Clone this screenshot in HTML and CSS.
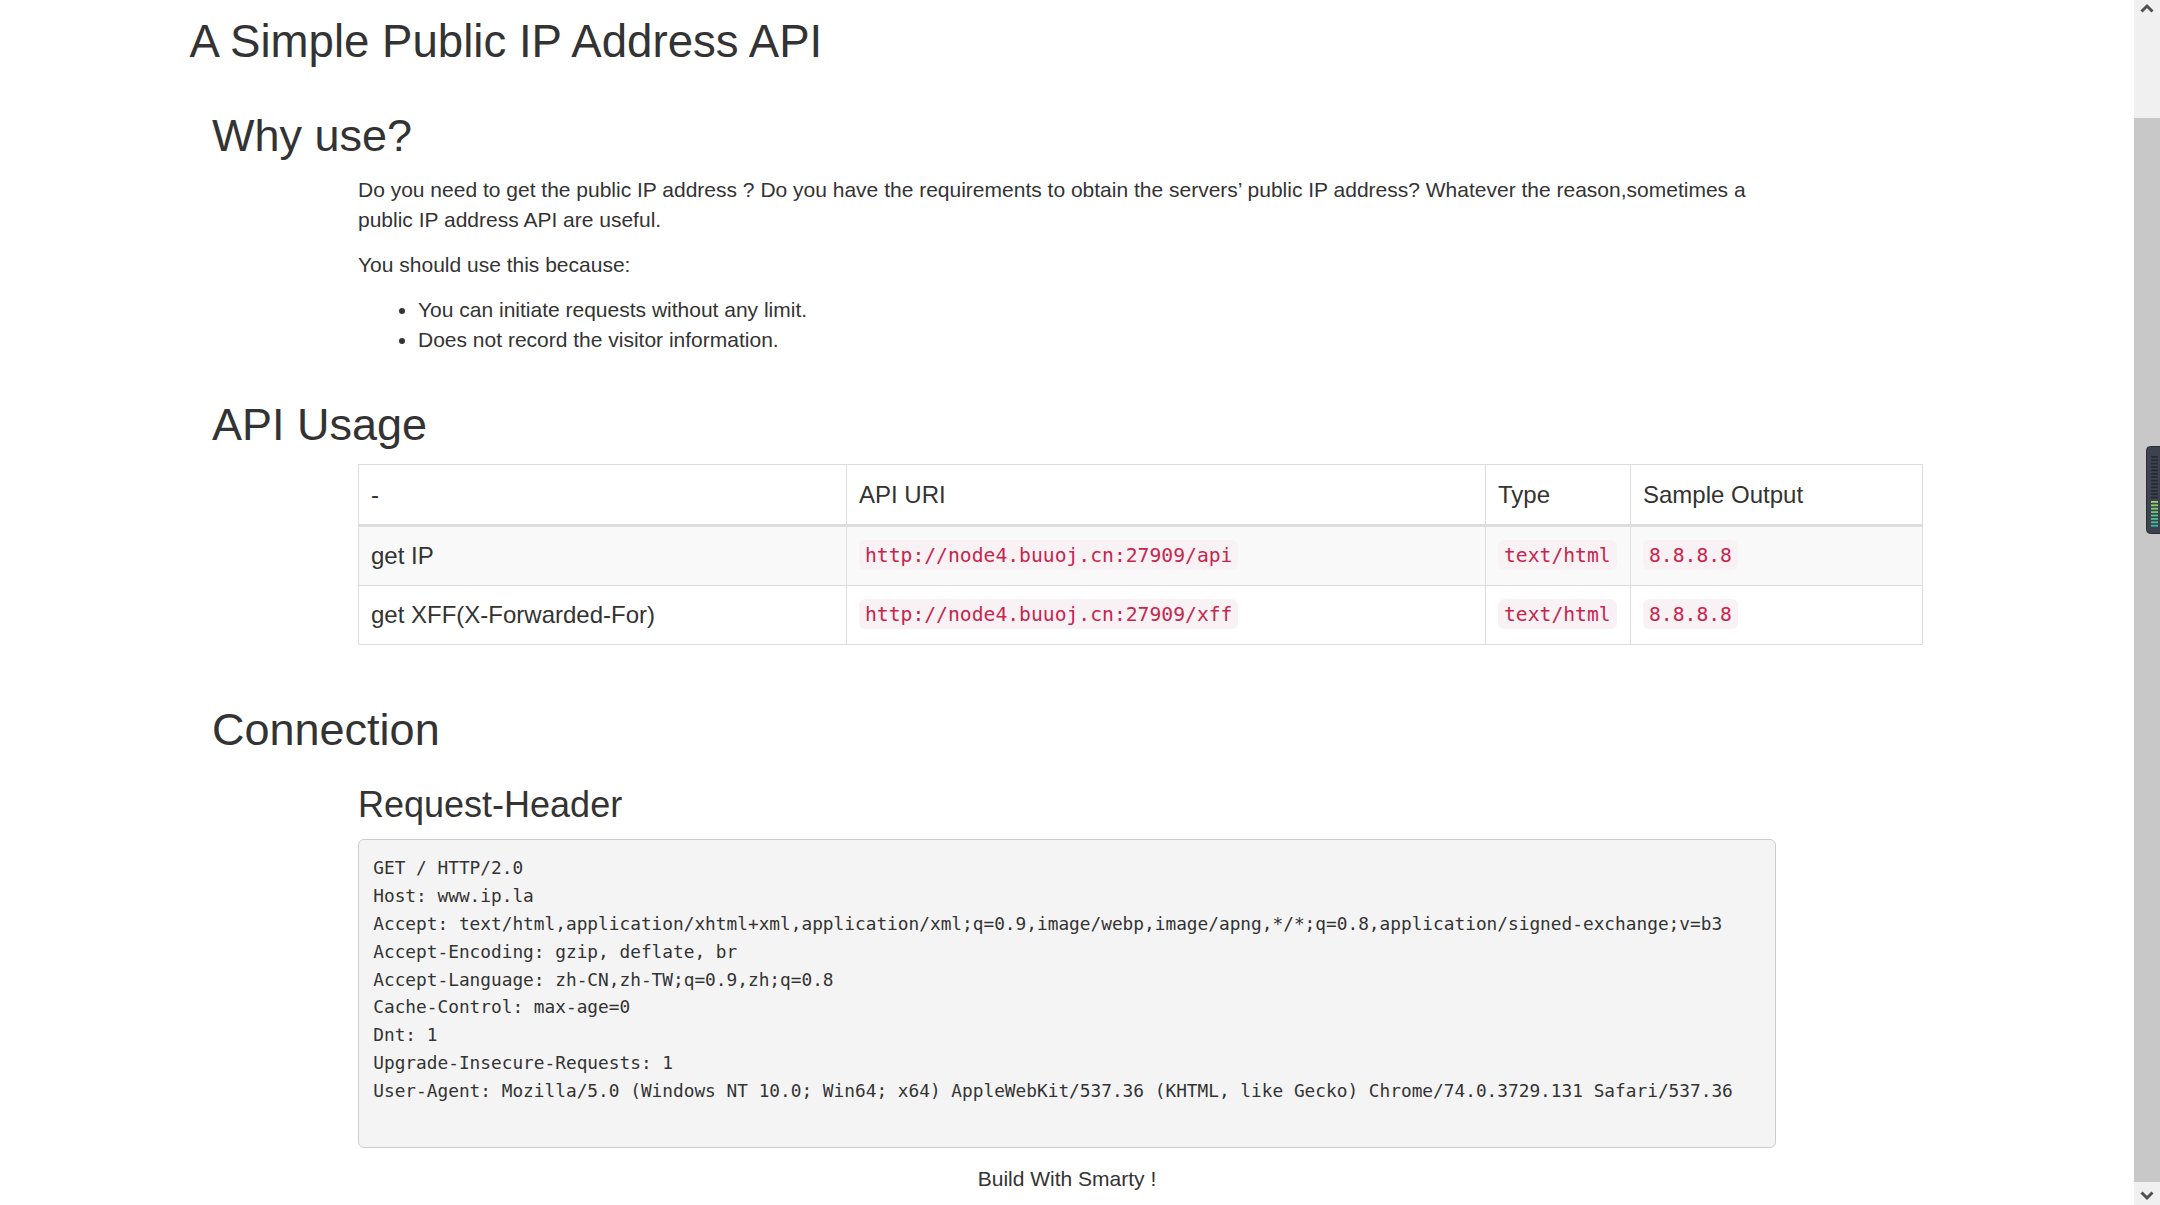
FILE: index.html
```html
<!DOCTYPE html>
<html lang="en">
<head>
<meta charset="utf-8">
<title>A Simple Public IP Address API</title>
<link rel="stylesheet" href="styles.css">
</head>
<body>
<div class="viewport">
  <main class="page">
    <div class="container">
      <h1 class="title">A Simple Public IP Address API</h1>

      <section class="section why">
        <h2 class="section-title">Why use?</h2>
        <div class="indent">
          <p>Do you need to get the public IP address ? Do you have the requirements to obtain the servers’ public IP address? Whatever the reason,sometimes a public IP address API are useful.</p>
          <p>You should use this because:</p>
          <ul class="reasons">
            <li>You can initiate requests without any limit.</li>
            <li>Does not record the visitor information.</li>
          </ul>
        </div>
      </section>

      <section class="section usage">
        <h2 class="section-title">API Usage</h2>
        <div class="indent wide">
          <table class="api-table">
            <colgroup>
              <col class="c-name"><col class="c-uri"><col class="c-type"><col class="c-out">
            </colgroup>
            <thead>
              <tr><th>-</th><th>API URI</th><th>Type</th><th>Sample Output</th></tr>
            </thead>
            <tbody>
              <tr class="striped"><td>get IP</td><td><code>http://node4.buuoj.cn:27909/api</code></td><td><code>text/html</code></td><td><code>8.8.8.8</code></td></tr>
              <tr><td>get XFF(X-Forwarded-For)</td><td><code>http://node4.buuoj.cn:27909/xff</code></td><td><code>text/html</code></td><td><code>8.8.8.8</code></td></tr>
            </tbody>
          </table>
        </div>
      </section>

      <section class="section connection">
        <h2 class="section-title">Connection</h2>
        <div class="indent">
          <h3 class="sub-title">Request-Header</h3>
          <pre class="headers">GET / HTTP/2.0
Host: www.ip.la
Accept: text/html,application/xhtml+xml,application/xml;q=0.9,image/webp,image/apng,*/*;q=0.8,application/signed-exchange;v=b3
Accept-Encoding: gzip, deflate, br
Accept-Language: zh-CN,zh-TW;q=0.9,zh;q=0.8
Cache-Control: max-age=0
Dnt: 1
Upgrade-Insecure-Requests: 1
User-Agent: Mozilla/5.0 (Windows NT 10.0; Win64; x64) AppleWebKit/537.36 (KHTML, like Gecko) Chrome/74.0.3729.131 Safari/537.36</pre>
        </div>
      </section>

      <footer class="footer">Build With Smarty !</footer>
    </div>
  </main>

  <div class="scrollbar">
    <div class="sb-btn sb-up">
      <svg width="14" height="10" viewBox="0 0 14 10"><path d="M1.5 8.5 L7 3 L12.5 8.5" fill="none" stroke="#505050" stroke-width="3"/></svg>
    </div>
    <div class="sb-track"></div>
    <div class="sb-thumb"></div>
    <div class="sb-btn sb-down">
      <svg width="14" height="10" viewBox="0 0 14 10"><path d="M1.5 1.5 L7 7 L12.5 1.5" fill="none" stroke="#505050" stroke-width="3"/></svg>
    </div>
    <div class="meter-widget">
      <svg width="16" height="88" viewBox="0 0 16 88">
        <rect x="0.5" y="0.5" width="22" height="87" rx="4" fill="#3d424e" stroke="#2a2e36"/>
        <g fill="#262a32">
          <rect x="5" y="10" width="7" height="1.6"/><rect x="5" y="13.4" width="7" height="1.6"/>
          <rect x="5" y="16.8" width="7" height="1.6"/><rect x="5" y="20.2" width="7" height="1.6"/>
          <rect x="5" y="23.6" width="7" height="1.6"/><rect x="5" y="27" width="7" height="1.6"/>
          <rect x="5" y="30.4" width="7" height="1.6"/><rect x="5" y="33.8" width="7" height="1.6"/>
          <rect x="5" y="37.2" width="7" height="1.6"/><rect x="5" y="40.6" width="7" height="1.6"/>
          <rect x="5" y="44" width="7" height="1.6"/><rect x="5" y="47.4" width="7" height="1.6"/>
          <rect x="5" y="50.8" width="7" height="1.6"/>
        </g>
        <g>
          <rect x="5" y="55" width="7" height="1.8" fill="#9fd36a"/><rect x="5" y="58.4" width="7" height="1.8" fill="#8fd06e"/>
          <rect x="5" y="61.8" width="7" height="1.8" fill="#7ccd74"/><rect x="5" y="65.2" width="7" height="1.8" fill="#6cca7c"/>
          <rect x="5" y="68.6" width="7" height="1.8" fill="#5cc685"/><rect x="5" y="72" width="7" height="1.8" fill="#4dc28f"/>
          <rect x="5" y="75.4" width="7" height="1.8" fill="#42be98"/><rect x="5" y="78.8" width="7" height="1.8" fill="#38b9a0"/>
        </g>
      </svg>
    </div>
  </div>
</div>
</body>
</html>
```

FILE: styles.css
```css
* {
  box-sizing: border-box;
}

html,
body {
  margin: 0;
  padding: 0;
}

body {
  font-family: "Liberation Sans", Arial, sans-serif;
  font-size: 21px;
  line-height: 30px;
  color: #333333;
  background: #ffffff;
  overflow: hidden;
}

.viewport {
  display: flex;
  height: 1205px;
}

.page {
  flex: 1;
  min-width: 0;
  overflow: hidden;
}

.container {
  width: 1755px;
  margin: 0 auto;
  display: flex;
  flex-direction: column;
}

.title {
  font-size: 45.6px;
  line-height: 49.5px;
  font-weight: normal;
  margin: 17px 0 0;
}

.section {
  display: flex;
  flex-direction: column;
}

.section-title {
  font-size: 45px;
  line-height: 49.5px;
  font-weight: normal;
  margin: 0 0 0 22.5px;
}

.indent {
  margin-left: 168.5px;
  width: 1417.5px;
  display: flow-root;
}

.indent.wide {
  width: 1564px;
}

/* Why use? */
.why .section-title {
  margin-top: 44px;
}

.why .indent {
  margin-top: 15px;
}

.indent p {
  margin: 0 0 15px;
}

.reasons {
  margin: 0;
  padding-left: 60px;
}

/* API usage */
.usage .section-title {
  margin-top: 45px;
}

.usage .indent {
  margin-top: 14.5px;
}

.api-table {
  width: 1564px;
  table-layout: fixed;
  border-collapse: collapse;
  border: 1px solid #dddddd;
  font-size: 24px;
  line-height: 34.3px;
}

.c-name { width: 488px; }
.c-uri { width: 639px; }
.c-type { width: 145px; }
.c-out { width: 292px; }

.api-table th,
.api-table td {
  border: 1px solid #dddddd;
  padding: 12px;
  text-align: left;
  vertical-align: top;
  font-weight: normal;
}

.api-table th {
  padding-top: 13px;
  border-bottom: 3px solid #dddddd;
}

.api-table td {
  height: 59px;
  padding-bottom: 11px;
}

.api-table tr.striped td {
  background: #f9f9f9;
}

.api-table code {
  font-family: "DejaVu Sans Mono", "Liberation Mono", monospace;
  font-size: 19.7px;
  line-height: 20px;
  vertical-align: 2.5px;
  color: #c7254e;
  background: #f9f2f4;
  padding: 3.5px 6px;
  border-radius: 6px;
}

/* Connection */
.connection .section-title {
  margin-top: 60px;
}

.sub-title {
  font-size: 36px;
  line-height: 39.6px;
  font-weight: normal;
  margin: 30.5px 0 0;
}

.headers {
  margin: 14.7px 0 0;
  padding: 14.25px 14.25px 42.1px;
  font-family: "DejaVu Sans Mono", "Liberation Mono", monospace;
  font-size: 17.8px;
  line-height: 27.86px;
  color: #333333;
  background: #f4f4f4;
  border: 1px solid #cccccc;
  border-radius: 6px;
  white-space: pre;
  overflow: hidden;
}

.footer {
  margin-top: 15.7px;
  text-align: center;
}

/* Scrollbar */
.scrollbar {
  position: relative;
  width: 26px;
  flex: 0 0 26px;
  display: flex;
  flex-direction: column;
  background: #f0f0f0;
}

.sb-btn {
  display: flex;
  justify-content: center;
  background: #f0f0f0;
}

.sb-up {
  height: 26px;
  padding-top: 3px;
}

.sb-track {
  height: 92px;
}

.sb-thumb {
  height: 1064px;
  background: #c8c8c8;
}

.sb-down {
  height: 23px;
  padding-top: 9px;
}

.meter-widget {
  position: absolute;
  left: 12px;
  top: 446px;
  width: 16px;
  height: 88px;
  overflow: hidden;
}
```
